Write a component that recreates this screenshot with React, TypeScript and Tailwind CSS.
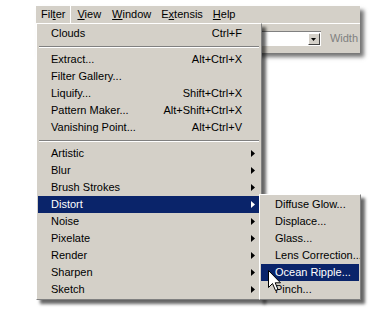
import React from 'react';

const font = { fontFamily: '"Liberation Sans", Arial, sans-serif' };

type Item =
  | { kind: 'item'; label: string; shortcut?: string; sub?: boolean; active?: boolean }
  | { kind: 'sep' };

const mainItems: Item[] = [
  { kind: 'item', label: 'Clouds', shortcut: 'Ctrl+F' },
  { kind: 'sep' },
  { kind: 'item', label: 'Extract...', shortcut: 'Alt+Ctrl+X' },
  { kind: 'item', label: 'Filter Gallery...' },
  { kind: 'item', label: 'Liquify...', shortcut: 'Shift+Ctrl+X' },
  { kind: 'item', label: 'Pattern Maker...', shortcut: 'Alt+Shift+Ctrl+X' },
  { kind: 'item', label: 'Vanishing Point...', shortcut: 'Alt+Ctrl+V' },
  { kind: 'sep' },
  { kind: 'item', label: 'Artistic', sub: true },
  { kind: 'item', label: 'Blur', sub: true },
  { kind: 'item', label: 'Brush Strokes', sub: true },
  { kind: 'item', label: 'Distort', sub: true, active: true },
  { kind: 'item', label: 'Noise', sub: true },
  { kind: 'item', label: 'Pixelate', sub: true },
  { kind: 'item', label: 'Render', sub: true },
  { kind: 'item', label: 'Sharpen', sub: true },
  { kind: 'item', label: 'Sketch', sub: true },
];

const distortItems = ['Diffuse Glow...', 'Displace...', 'Glass...', 'Lens Correction...', 'Ocean Ripple...', 'Pinch...'];

const Arrow: React.FC<{ white?: boolean }> = ({ white }) => (
  <svg width="4" height="7" viewBox="0 0 4 7">
    <path d="M0 0 L4 3.5 L0 7 Z" fill={white ? '#ffffff' : '#000000'} />
  </svg>
);

const Mnemonic: React.FC<{ pre: string; key_: string; post: string }> = ({ pre, key_, post }) => (
  <span>
    {pre}
    <span className="underline underline-offset-[1px]">{key_}</span>
    {post}
  </span>
);

const Cursor = () => (
  <svg width="14" height="23" viewBox="0 0 14 23" className="absolute left-[268px] top-[270px]">
    <path
      d="M0.5 0.5 L0.5 17.5 L4.5 13.5 L7.5 20.5 L10 19.5 L7.2 12.8 L12.5 12.8 Z"
      fill="#ffffff"
      stroke="#000000"
      strokeWidth="1"
    />
  </svg>
);

export default function App() {
  return (
    <div className="relative w-[390px] h-[311px] bg-white overflow-hidden text-[11px] text-black" style={font}>
      {/* menubar + options bar */}
      <div className="ml-[36px] mt-[6px] w-[324px] bg-[#d4d0c8] shadow-[4px_4px_4px_rgba(0,0,0,0.55)] overflow-hidden">
        <div className="h-[17px] flex items-center">
          <div className="h-full flex items-center pl-[5px] pr-[5px] border-r border-white">
            <Mnemonic pre="Fil" key_="t" post="er" />
          </div>
          <div className="px-[6px]">
            <Mnemonic pre="" key_="V" post="iew" />
          </div>
          <div className="pl-[5px] pr-[4px]">
            <Mnemonic pre="" key_="W" post="indow" />
          </div>
          <div className="pl-[6px] pr-[5px]">
            <Mnemonic pre="E" key_="x" post="tensis" />
          </div>
          <div className="px-[5px]">
            <Mnemonic pre="" key_="H" post="elp" />
          </div>
        </div>
        <div className="h-[30px] border-t border-white flex items-center justify-end pr-[2px]">
          <div className="w-[90px] h-[15px] bg-white border-t border-l border-[#808080] border-r-white border-b-white flex justify-end items-center pr-[1px]">
            <div className="w-[12px] h-[12px] bg-[#d4d0c8] border border-t-white border-l-white border-r-[#404040] border-b-[#404040] flex items-center justify-center">
              <svg width="5" height="3" viewBox="0 0 5 3">
                <path d="M0 0 L5 0 L2.5 3 Z" fill="#000" />
              </svg>
            </div>
          </div>
          <span className="ml-[9px] text-[#808080] whitespace-nowrap">Width</span>
        </div>
      </div>

      {/* Filter menu */}
      <div className="absolute left-[36px] top-[23px] w-[226px] bg-[#d4d0c8] border border-t-white border-l-white border-r-[#808080] border-b-[#808080] p-[1px] shadow-[4px_4px_3px_rgba(0,0,0,0.6)]">
        {mainItems.map((it, i) =>
          it.kind === 'sep' ? (
            <div key={i} className="h-[9px] flex items-center px-[1px]">
              <div className="w-full border-t border-[#808080] border-b border-b-white" />
            </div>
          ) : (
            <div
              key={i}
              className={`h-[17px] flex items-center pl-[13px] pr-[5px] whitespace-nowrap ${
                it.active ? 'bg-[#0a246a] text-white' : ''
              }`}
            >
              <span className="flex-1">{it.label}</span>
              {it.shortcut && <span>{it.shortcut}</span>}
              <span className="w-[13px] flex justify-end">{it.sub && <Arrow white={it.active} />}</span>
            </div>
          )
        )}
      </div>

      {/* Distort submenu */}
      <div className="absolute left-[259px] top-[194px] w-[102px] bg-[#d4d0c8] border border-t-white border-l-white border-r-[#808080] border-b-[#808080] p-[1px] shadow-[4px_4px_3px_rgba(0,0,0,0.6)] overflow-hidden">
        {distortItems.map((label) => (
          <div
            key={label}
            className={`h-[17px] flex items-center pl-[14px] whitespace-nowrap ${
              label === 'Ocean Ripple...' ? 'bg-[#0a246a] text-white' : ''
            }`}
          >
            {label}
          </div>
        ))}
      </div>

      <Cursor />
    </div>
  );
}
